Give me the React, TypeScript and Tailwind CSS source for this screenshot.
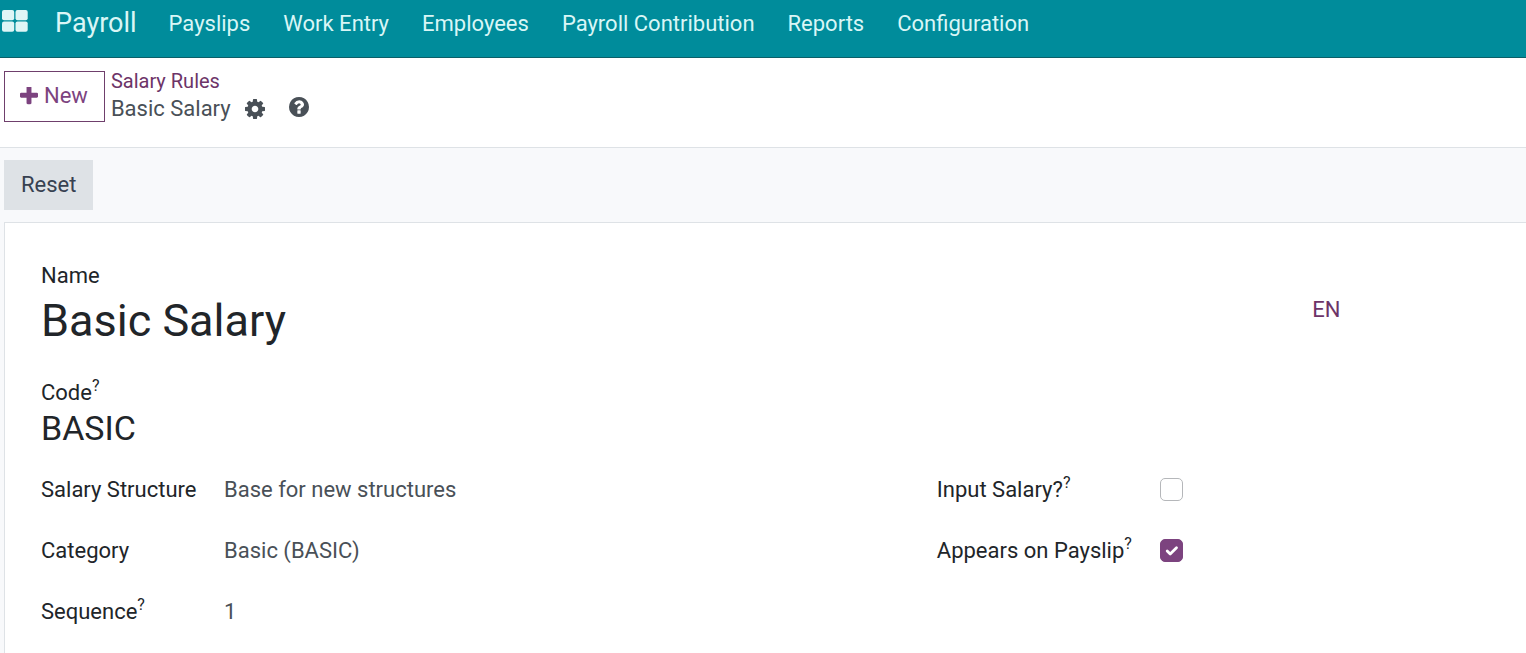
import { useState } from "react";
import type { ReactNode } from "react";

const menuItems = [
  "Payslips",
  "Work Entry",
  "Employees",
  "Payroll Contribution",
  "Reports",
  "Configuration",
];

function AppsIcon() {
  return (
    <svg viewBox="0 0 26 22" className="h-[22px] w-[26px] fill-[#dff5f6]" aria-hidden="true">
      <rect x="0" y="0" width="12.200" height="10.200" rx="2" />
      <rect x="13.500" y="0" width="12.200" height="10.200" rx="2" />
      <rect x="0" y="11.500" width="12.200" height="10.200" rx="2" />
      <rect x="13.500" y="11.500" width="12.200" height="10.200" rx="2" />
    </svg>
  );
}

function PlusIcon() {
  return (
    <svg viewBox="192 192 1408 1408" className="size-[18px] fill-[#7c437f]" aria-hidden="true">
      <path d="M1600 736v192q0 40-28 68t-68 28h-416v416q0 40-28 68t-68 28h-192q-40 0-68-28t-28-68v-416h-416q-40 0-68-28t-28-68v-192q0-40 28-68t68-28h416v-416q0-40 28-68t68-28h192q40 0 68 28t28 68v416h416q40 0 68 28t28 68z" />
    </svg>
  );
}

function CogIcon() {
  return (
    <svg viewBox="128 128 1536 1536" className="size-5 fill-[#495057]" aria-hidden="true">
      <path d="M1152 896q0-106-75-181t-181-75-181 75-75 181 75 181 181 75 181-75 75-181zm512-109v222q0 12-8 23t-20 13l-185 28q-19 54-39 91 35 50 107 138 10 12 10 25t-9 23q-27 37-99 108t-94 71q-12 0-26-9l-138-108q-44 23-91 38-16 136-29 186-7 28-36 28h-222q-14 0-24.5-8.5t-11.5-21.5l-28-184q-49-16-90-37l-141 107q-10 9-25 9-14 0-25-11-126-114-165-168-7-10-7-23 0-12 8-23 15-21 51-66.5t54-70.5q-27-50-41-99l-183-27q-13-2-21-12.5t-8-23.5v-222q0-12 8-23t19-13l186-28q14-46 39-92-40-57-107-138-10-12-10-24 0-10 9-23 26-36 98.5-107.5t94.5-71.5q13 0 26 10l138 107q44-23 91-38 16-136 29-186 7-28 36-28h222q14 0 24.5 8.5t11.5 21.5l28 184q49 16 90 37l142-107q9-9 24-9 13 0 25 10 129 119 165 170 7 8 7 22 0 12-8 23-15 21-51 66.5t-54 70.5q26 50 41 98l183 28q13 2 21 12.5t8 23.5z" />
    </svg>
  );
}

function HelpIcon() {
  return (
    <svg viewBox="128 128 1536 1536" className="size-5 fill-[#495057]" aria-hidden="true">
      <path d="M1024 1376v-192q0-14-9-23t-23-9h-192q-14 0-23 9t-9 23v192q0 14 9 23t23 9h192q14 0 23-9t9-23zm256-672q0-88-55.5-163t-138.5-116-170-41q-243 0-371 213-15 24 8 42l132 100q7 6 19 6 16 0 25-12 53-68 86-92 34-24 86-24 48 0 85.5 26t37.5 59q0 38-20 61t-68 45q-63 28-115.5 86.5t-52.5 125.5v36q0 14 9 23t23 9h192q14 0 23-9t9-23q0-19 21.5-49.5t54.5-49.5q32-18 49-28.5t46-35 44.5-48 28-60.5 12.5-81zm384 192q0 209-103 385.5t-279.5 279.5-385.5 103-385.5-103-279.5-279.5-103-385.5 103-385.5 279.5-279.5 385.5-103 385.5 103 279.5 279.5 103 385.5z" />
    </svg>
  );
}

function FieldLabel({ htmlFor, help, children }: { htmlFor: string; help?: boolean; children: ReactNode }) {
  return (
    <label htmlFor={htmlFor} className="flex h-[33px] items-center whitespace-nowrap text-[#212529]">
      {children}
      {help && <span className="self-start text-base leading-5">?</span>}
    </label>
  );
}

function TextRow({ id, label, help, value }: { id: string; label: string; help?: boolean; value: string }) {
  return (
    <div className="grid grid-cols-[183px_1fr] items-center">
      <FieldLabel htmlFor={id} help={help}>{label}</FieldLabel>
      <input id={id} defaultValue={value} className="h-[33px] w-full min-w-0 bg-transparent text-[#495057] outline-none" />
    </div>
  );
}

function CheckRow({ id, label, initial }: { id: string; label: string; initial: boolean }) {
  const [checked, setChecked] = useState(initial);
  return (
    <div className="grid grid-cols-[223px_1fr] items-center">
      <FieldLabel htmlFor={id} help>{label}</FieldLabel>
      <span className="relative size-[23px]">
        <input
          id={id}
          type="checkbox"
          checked={checked}
          onChange={(e) => setChecked(e.target.checked)}
          className="block size-[23px] appearance-none rounded-[5px] border border-[#b5b7ba] bg-white checked:border-[#7c437f] checked:bg-[#7c437f]"
        />
        {checked && (
          <svg viewBox="0 0 23 23" className="pointer-events-none absolute inset-0 size-[23px] fill-none stroke-white" aria-hidden="true">
            <path d="M7.200 12l3 3 6.300-6.300" strokeWidth="2.800" strokeLinecap="round" strokeLinejoin="round" />
          </svg>
        )}
      </span>
    </div>
  );
}

export default function App() {
  return (
    <div className="min-h-screen overflow-x-hidden bg-[#f8f9fb] font-['Roboto',sans-serif] text-[22px] leading-[33px]">
      <header className="flex h-[58px] items-start border-b border-[#0b5f68] bg-[#008c9b] pl-[2px] text-[#d9f6f6]">
        <button type="button" aria-label="Apps" className="mt-2.5">
          <AppsIcon />
        </button>
        <a href="#payroll" className="ml-[27px] pt-[7px] text-[27px]">Payroll</a>
        <nav className="ml-8 flex gap-[33px] whitespace-nowrap pt-[7px]">
          {menuItems.map((item) => (
            <a key={item} href="#menu">{item}</a>
          ))}
        </nav>
      </header>

      <section className="flex h-[90px] items-start border-b border-[#dee2e6] bg-white pl-1 pt-[13px]">
        <button type="button" className="flex h-[51px] items-center gap-1.5 border border-[#6f3f6c] pb-0.5 pl-[15px] pr-4 text-[#7c437f]">
          <PlusIcon />
          New
        </button>
        <div className="ml-1.5 flex flex-col">
          <a href="#rules" className="-mt-0.5 text-xl leading-6 text-[#6d3468]">Salary Rules</a>
          <div className="flex items-center text-[#495057]">
            <span className="leading-8">Basic Salary</span>
            <button type="button" aria-label="Actions" className="ml-3.5"><CogIcon /></button>
            <button type="button" aria-label="Help" className="mb-1 ml-6"><HelpIcon /></button>
          </div>
        </div>
      </section>

      <div className="flex h-[74px] items-center pl-1">
        <button type="button" className="h-[50px] bg-[#dee2e6] px-[17px] pb-0.5 text-[#374151]">Reset</button>
      </div>

      <main className="ml-1 min-h-[431px] border-l border-t border-[#dee2e6] bg-white pl-9 pt-9">
        <FieldLabel htmlFor="name">Name</FieldLabel>
        <div className="flex w-7/8 items-start justify-between">
          <input id="name" defaultValue="Basic Salary" className="h-[56px] min-w-0 flex-1 bg-transparent text-[45px] text-[#212529] outline-none" />
          <button type="button" className="pt-px text-[#6d3468]">EN</button>
        </div>
        <div className="mt-7">
          <FieldLabel htmlFor="code" help>Code</FieldLabel>
          <input id="code" defaultValue="BASIC" className="block h-[38px] w-1/2 bg-transparent text-[34px] text-[#212529] outline-none" />
        </div>
        <div className="mt-[26px] grid grid-cols-[3fr_2fr] gap-x-3">
          <div className="flex flex-col gap-7">
            <TextRow id="structure" label="Salary Structure" value="Base for new structures" />
            <TextRow id="category" label="Category" value="Basic (BASIC)" />
            <TextRow id="sequence" label="Sequence" help value="1" />
          </div>
          <div className="flex flex-col gap-7">
            <CheckRow id="input-salary" label="Input Salary?" initial={false} />
            <CheckRow id="appears" label="Appears on Payslip" initial={true} />
          </div>
        </div>
      </main>
    </div>
  );
}
